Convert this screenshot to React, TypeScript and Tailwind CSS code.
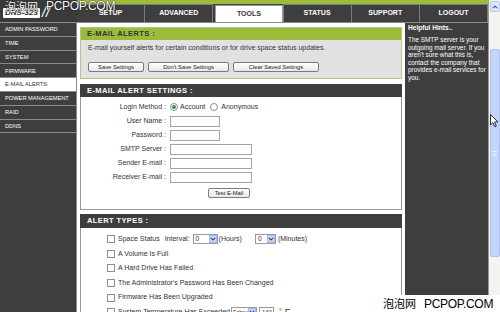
import React from "react";

const sidebar = [
  "ADMIN PASSWORD",
  "TIME",
  "SYSTEM",
  "FIRMWARE",
  "E-MAIL ALERTS",
  "POWER MANAGEMENT",
  "RAID",
  "DDNS",
];
const tabs = ["SETUP", "ADVANCED", "TOOLS", "STATUS", "SUPPORT", "LOGOUT"];

function Chevron() {
  return (
    <svg width="6" height="4" viewBox="0 0 6 4">
      <path d="M0.8 0.8 L3 3 L5.2 0.8" fill="none" stroke="#2d4a9a" strokeWidth="1.2" />
    </svg>
  );
}

function Checkbox() {
  return <span className="w-[8px] h-[8px] border border-[#8f8f8f] bg-white shrink-0" />;
}

function Button({ label, w }: { label: string; w: string }) {
  return (
    <div
      className={`${w} h-[10px] border border-[#7a7a7a] rounded-[2px] bg-gradient-to-b from-white to-[#e8e8e8] flex items-center justify-center text-[5.8px] text-[#222]`}
    >
      {label}
    </div>
  );
}

function Field({ w }: { w: string }) {
  return <span className={`${w} h-[11px] border border-[#a5a5a5] bg-white block`} />;
}

export default function App() {
  const rows: [string, React.ReactNode][] = [
    ["User Name :", <Field w="w-[50px]" />],
    ["Password :", <Field w="w-[50px]" />],
    ["SMTP Server :", <Field w="w-[82px]" />],
    ["Sender E-mail :", <Field w="w-[82px]" />],
    ["Receiver E-mail :", <Field w="w-[82px]" />],
  ];
  return (
    <div className="w-[500px] h-[312px] overflow-hidden flex bg-white relative font-['Liberation_Sans',Arial,sans-serif] text-[#333]">
      {/* page */}
      <div className="w-[488px] h-full flex flex-col">
        {/* top */}
        <div className="h-[22px] shrink-0 flex">
          <div className="w-[77px] h-full bg-[#3a3a3a] relative">
            <div className="absolute left-[3px] top-[8px] w-[37px] h-[10px] bg-white rounded-[1px] flex items-center pl-[2px] text-[8px] font-bold italic text-[#333] leading-none">
              DNS-323
            </div>
            <div className="absolute left-[42px] top-[5px] text-[14px] italic text-white leading-none">//</div>
          </div>
          <div className="flex-1 flex flex-col">
            <div className="h-[4px] shrink-0 bg-[#9dbb3b]" />
            <div className="flex-1 flex bg-[#3e3e3e]">
              {tabs.map((t) =>
                t === "TOOLS" ? (
                  <div key={t} className="flex-1 flex pl-[2px] pt-[1px] border-r border-[#7d7d7d]">
                    <div className="flex-1 bg-white border border-b-0 border-[#9a9a9a] flex items-center justify-center text-[7px] font-bold text-[#333]">
                      {t}
                    </div>
                  </div>
                ) : (
                  <div
                    key={t}
                    className="flex-1 border-r border-t border-[#7d7d7d] flex items-center justify-center text-[7px] font-bold text-white"
                  >
                    {t}
                  </div>
                )
              )}
            </div>
          </div>
        </div>
        {/* body */}
        <div className="flex-1 min-h-0 overflow-hidden flex border-t border-[#8a8a8a]">
          {/* sidebar */}
          <div className="w-[77px] shrink-0 bg-[#3e3e3e] border-r border-[#8a8a8a] flex flex-col">
            {sidebar.map((s) => (
              <div
                key={s}
                className={`h-[13.8px] shrink-0 border-b border-[#8a8a8a] flex items-center pl-[5px] text-[5.7px] ${
                  s === "E-MAIL ALERTS" ? "bg-white text-[#333]" : "text-white"
                }`}
              >
                {s}
              </div>
            ))}
          </div>
          {/* main */}
          <div className="w-[328px] shrink-0 bg-white px-[3px] pt-[4px] flex flex-col">
            <div className="shrink-0 border border-[#b6c785]">
              <div className="h-[12px] bg-[#9dbb3b] flex items-center pl-[6px] text-[7.5px] font-bold tracking-[0.4px] text-[#333]">
                E-MAIL ALERTS :
              </div>
              <div className="h-[38px] bg-[#e1e1e1] px-[7px] pt-[3px]">
                <div className="text-[7px] leading-[9px] text-[#333]">
                  E-mail yourself alerts for certain conditions or for drive space status updates.
                </div>
                <div className="flex gap-[4px] mt-[10px]">
                  <Button label="Save Settings" w="w-[56px]" />
                  <Button label="Don't Save Settings" w="w-[81px]" />
                  <Button label="Clear Saved Settings" w="w-[86px]" />
                </div>
              </div>
            </div>

            <div className="shrink-0 mt-[5px]">
              <div className="h-[13px] bg-[#3e3e3e] flex items-center pl-[7px] text-[7.5px] font-bold tracking-[0.4px] text-white">
                E-MAIL ALERT SETTINGS :
              </div>
              <div className="h-[113px] border border-t-0 border-[#9a9a9a] pt-[3px] text-[7px] text-[#333]">
                <div className="grid grid-cols-[85px_1fr] gap-x-[4px]">
                  <div className="h-[14px] flex items-center justify-end">Login Method :</div>
                  <div className="h-[14px] flex items-center">
                    <span className="w-[8px] h-[8px] rounded-full border border-[#7f8f9f] bg-white flex items-center justify-center">
                      <span className="w-[3.5px] h-[3.5px] rounded-full bg-[#2f9a34]" />
                    </span>
                    <span className="ml-[2px]">Account</span>
                    <span className="w-[8px] h-[8px] rounded-full border border-[#7f8f9f] bg-white ml-[5px]" />
                    <span className="ml-[3px]">Anonymous</span>
                  </div>
                  {rows.map(([l, f]) => (
                    <React.Fragment key={l}>
                      <div className="h-[14px] flex items-center justify-end">{l}</div>
                      <div className="h-[14px] flex items-center">{f}</div>
                    </React.Fragment>
                  ))}
                </div>
                <div className="flex mt-[4px] pl-[127px]">
                  <Button label="Test E-Mail" w="w-[42px]" />
                </div>
              </div>
            </div>

            <div className="shrink-0 mt-[4px]">
              <div className="h-[14px] bg-[#3e3e3e] flex items-center pl-[7px] text-[7.5px] font-bold tracking-[0.4px] text-white">
                ALERT TYPES :
              </div>
              <div className="h-[120px] border border-t-0 border-[#9a9a9a] pt-[4px] pl-[26px] text-[7px] text-[#333]">
                <div className="h-[14.6px] flex items-center">
                  <Checkbox />
                  <span className="ml-[3px]">Space Status</span>
                  <span className="ml-[5px]">Interval:</span>
                  <div className="ml-[3px] w-[25px] h-[10px] border border-[#9a9a9a] bg-white flex items-center">
                    <span className="flex-1 pl-[2px] text-[6.5px]">0</span>
                    <span className="w-[8px] h-[8px] bg-[#c9d8f8] border border-[#a6bbea] flex items-center justify-center">
                      <Chevron />
                    </span>
                  </div>
                  <span className="ml-[1px]">(Hours)</span>
                  <div className="ml-[13px] w-[21px] h-[10px] border border-[#9a9a9a] bg-white flex items-center">
                    <span className="flex-1 pl-[2px] text-[6.5px]">0</span>
                    <span className="w-[8px] h-[8px] bg-[#c9d8f8] border border-[#a6bbea] flex items-center justify-center">
                      <Chevron />
                    </span>
                  </div>
                  <span className="ml-[2px]">(Minutes)</span>
                </div>
                {[
                  "A Volume Is Full",
                  "A Hard Drive Has Failed",
                  "The Administrator's Password Has Been Changed",
                  "Firmware Has Been Upgraded",
                ].map((t) => (
                  <div key={t} className="h-[14.6px] flex items-center">
                    <Checkbox />
                    <span className="ml-[3px]">{t}</span>
                  </div>
                ))}
                <div className="h-[14.6px] flex items-center">
                  <Checkbox />
                  <span className="ml-[3px]">System Temperature Has Exceeded</span>
                  <div className="ml-[1px] w-[26px] h-[10px] border border-[#9a9a9a] bg-white flex items-center">
                    <span className="flex-1 pl-[1px] text-[5.5px] overflow-hidden whitespace-nowrap">Fahrenheit</span>
                    <span className="w-[8px] h-[8px] bg-[#c9d8f8] border border-[#a6bbea] flex items-center justify-center shrink-0">
                      <Chevron />
                    </span>
                  </div>
                  <span className="ml-[2px] w-[15px] h-[10px] border border-[#9a9a9a] bg-white text-[6px] flex items-center pl-[2px]">
                    140
                  </span>
                  <span className="ml-[5px]">°</span>
                  <span className="ml-[3px] text-[9px]">F</span>
                </div>
              </div>
            </div>
          </div>
          {/* hints */}
          <div className="w-[83px] shrink-0 bg-[#3e3e3e] pl-[3px] pt-[1px] text-white">
            <div className="text-[6.6px] font-bold leading-[8px]">Helpful Hints..</div>
            <div className="mt-[4px] text-[6.4px] leading-[7.5px]">
              The SMTP server is your outgoing mail server. If you aren't sure what this is, contact the company that
              provides e-mail services for you.
            </div>
          </div>
        </div>
      </div>

      {/* scrollbar */}
      <div className="w-[12px] h-full border-l border-[#9a9a9a] bg-[#f3f3ef] flex flex-col items-center pt-[1px] pb-[1px]">
        <div className="w-[10px] h-[11px] shrink-0 rounded-[2px] bg-[#dde7fb] border border-[#b8c9f0] flex items-center justify-center">
          <svg width="6" height="4" viewBox="0 0 6 4">
            <path d="M0.8 3.2 L3 1 L5.2 3.2" fill="none" stroke="#4d6185" strokeWidth="1.2" />
          </svg>
        </div>
        <div className="h-[37px] shrink-0" />
        <div className="w-[10px] h-[208px] shrink-0 rounded-[2px] bg-[#c4d5fb] border border-[#aec3f2] flex items-center justify-center">
          <div className="flex flex-col gap-[1px]">
            <span className="w-[5px] h-[1px] bg-[#e9efff]" />
            <span className="w-[5px] h-[1px] bg-[#e9efff]" />
            <span className="w-[5px] h-[1px] bg-[#e9efff]" />
          </div>
        </div>
        <div className="flex-1" />
        <div className="w-[10px] h-[11px] shrink-0 rounded-[2px] bg-[#dde7fb] border border-[#b8c9f0] flex items-center justify-center">
          <Chevron />
        </div>
      </div>

      {/* cursor */}
      <svg className="absolute left-[490px] top-[114px]" width="9" height="14" viewBox="0 0 9 14">
        <path d="M0.5 0.5 L0.5 11 L3 8.6 L4.8 12.8 L6.3 12.1 L4.6 8 L8 8 Z" fill="white" stroke="black" strokeWidth="0.8" />
      </svg>

      {/* watermarks */}
      <div className="absolute left-[5px] top-0 flex items-center gap-[8px] text-white leading-none [text-shadow:0_0_1px_#000,0_0_1px_#000]">
        <span className="text-[11px] font-['Noto_Sans_CJK_SC',sans-serif]">泡泡网</span>
        <span className="text-[12px] tracking-[-0.3px]">PCPOP.COM</span>
      </div>
      <div className="absolute right-0 bottom-0 w-[120px] h-[17px] bg-white flex items-center pl-[3px] gap-[8px] text-black leading-none">
        <span className="text-[11px] font-['Noto_Sans_CJK_SC',sans-serif]">泡泡网</span>
        <span className="text-[12px] tracking-[-0.3px]">PCPOP.COM</span>
      </div>
    </div>
  );
}
